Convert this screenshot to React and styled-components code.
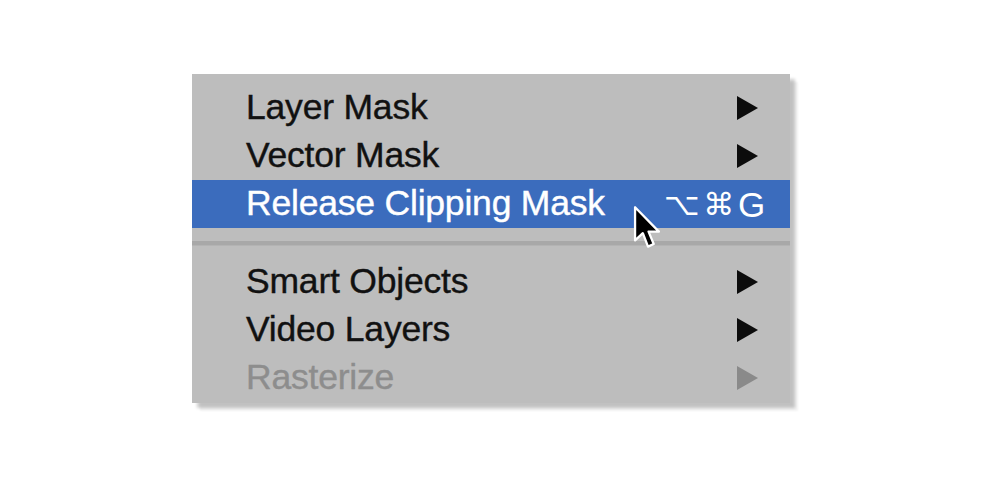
import styled, { createGlobalStyle } from "styled-components";

const GlobalStyle = createGlobalStyle`
  html, body {
    margin: 0;
    padding: 0;
    background: #ffffff;
  }
  body {
    font-family: "Liberation Sans", Arial, sans-serif;
  }
`;

const Page = styled.div`
  width: 1000px;
  height: 500px;
  box-sizing: border-box;
  padding: 74px 0 0 192px;
  background: #ffffff;
`;

const Menu = styled.div`
  position: relative;
  width: 598px;
  box-sizing: border-box;
  padding: 10px 0 1px;
  background: #bdbdbd;
  box-shadow: 5px 5px 3px rgba(0, 0, 0, 0.2), 8px 8px 2px rgba(0, 0, 0, 0.05);
`;

const Row = styled.div`
  position: relative;
  height: 48px;
  display: flex;
  align-items: center;
  justify-content: space-between;
  padding: 0 32px 0 54px;
  box-sizing: border-box;
  font-size: 35.5px;
  letter-spacing: -0.2px;
  -webkit-text-stroke: 0.4px currentColor;
  color: ${p => (p.$disabled ? "#8d8d8d" : p.$active ? "#ffffff" : "#111111")};
  background: ${p => (p.$active ? "#3b6cbd" : "transparent")};
  ${p => p.$active && "padding-right: 25px;"}
`;

const Label = styled.span`
  line-height: 1;
`;

const Shortcut = styled.span`
  display: flex;
  align-items: center;
  gap: 4px;
  color: #ffffff;
  line-height: 1;
  -webkit-text-stroke: 0;
`;

const Key = styled.span`
  font-family: ${p => (p.$latin ? '"Liberation Sans", sans-serif' : '"DejaVu Sans", sans-serif')};
  font-size: ${p => (p.$latin ? "35px" : "31px")};
`;

const Separator = styled.div`
  height: 30px;
  display: flex;
  align-items: center;
  &::after {
    content: "";
    display: block;
    width: 100%;
    height: 4px;
    background: #a8a8a8;
    border-bottom: 1px solid #b3b3b3;
  }
`;

const Arrow = styled.svg`
  width: 21px;
  height: 24px;
  display: block;
  fill: ${p => (p.$disabled ? "#8a8a8a" : "#0c0c0c")};
`;

const Cursor = styled.svg`
  position: absolute;
  left: 441px;
  top: 25px;
  width: 29px;
  height: 46px;
  z-index: 2;
`;

const SubArrow = ({ disabled }) => (
  <Arrow $disabled={disabled} viewBox="0 0 21 24">
    <path d="M0 0 L21 12 L0 24 Z" />
  </Arrow>
);

const Pointer = () => (
  <Cursor viewBox="0 0 28 44">
    <path
      d="M2 2 L2 34 L9.5 27 L14.5 40 L20 37.5 L15 25.5 L25 25.5 Z"
      fill="#000000"
      stroke="#ffffff"
      strokeWidth="2.2"
      strokeLinejoin="round"
    />
  </Cursor>
);

const items = [
  { label: "Layer Mask", sub: true },
  { label: "Vector Mask", sub: true },
  { label: "Release Clipping Mask", active: true },
  { separator: true },
  { label: "Smart Objects", sub: true },
  { label: "Video Layers", sub: true },
  { label: "Rasterize", sub: true, disabled: true },
];

export default function App() {
  return (
    <>
      <GlobalStyle />
      <Page>
        <Menu>
          {items.map((item, i) =>
            item.separator ? (
              <Separator key={i} />
            ) : (
              <Row key={i} $active={item.active} $disabled={item.disabled}>
                <Label>{item.label}</Label>
                {item.sub && <SubArrow disabled={item.disabled} />}
                {item.active && (
                  <Shortcut>
                    <Key>⌥</Key>
                    <Key>⌘</Key>
                    <Key $latin>G</Key>
                  </Shortcut>
                )}
                {item.active && <Pointer />}
              </Row>
            )
          )}
        </Menu>
      </Page>
    </>
  );
}
